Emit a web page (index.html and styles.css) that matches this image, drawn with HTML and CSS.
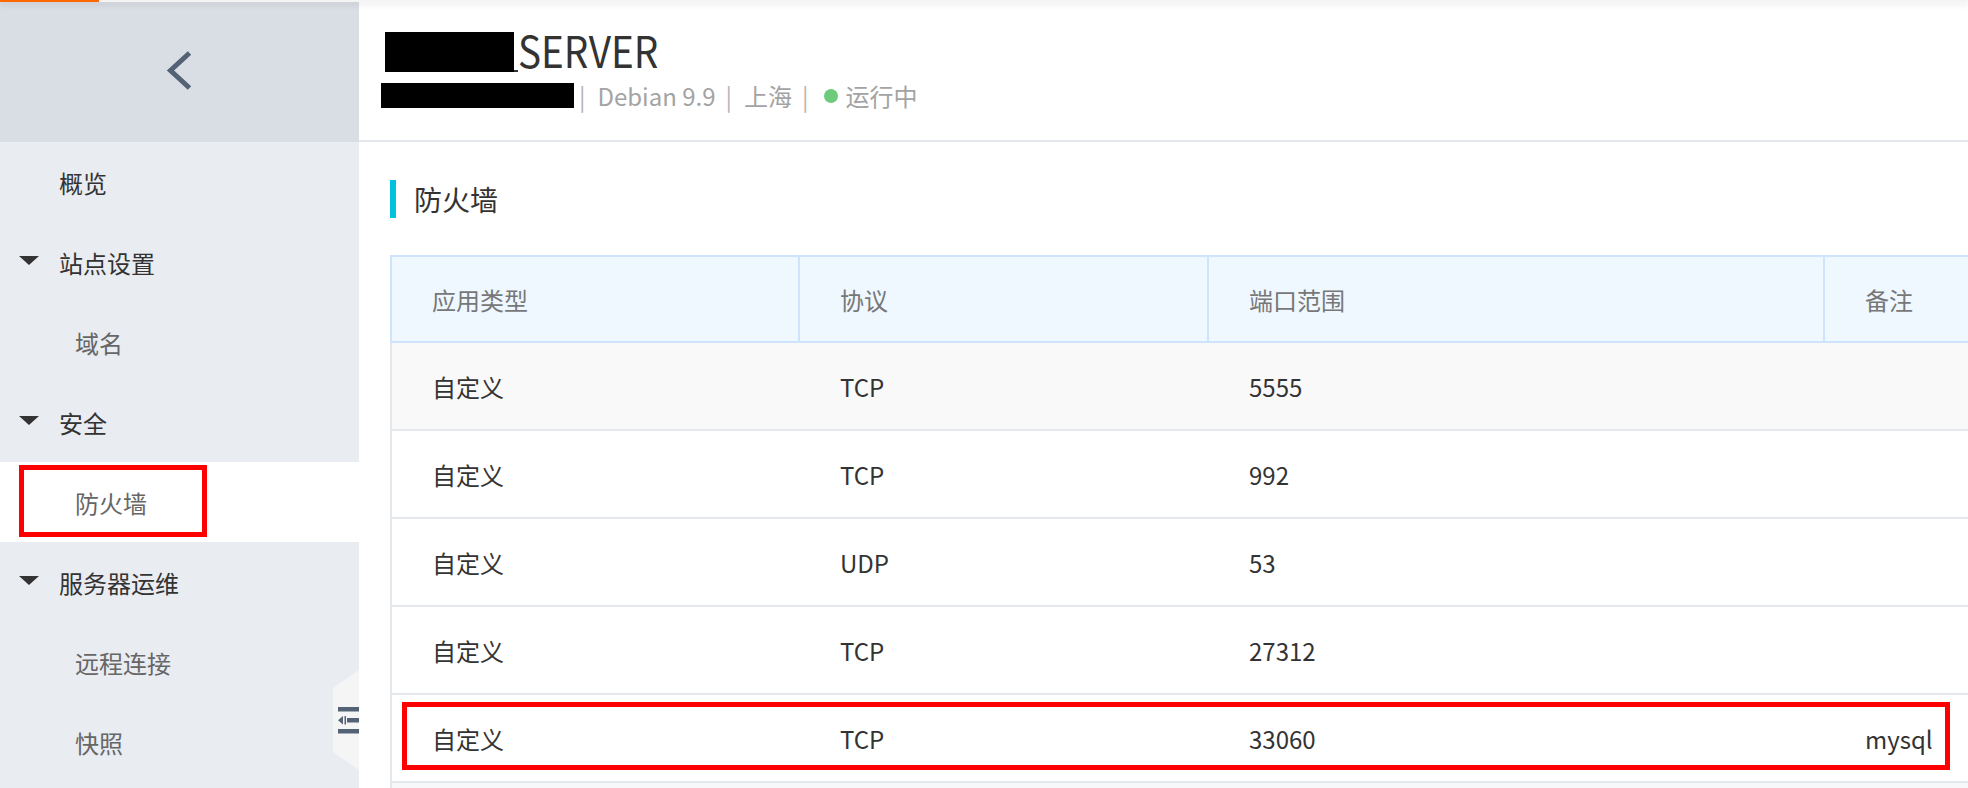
FILE: index.html
```html
<!DOCTYPE html>
<html lang="zh-CN">
<head>
<meta charset="utf-8">
<title>防火墙</title>
<link rel="stylesheet" href="styles.css">
</head>
<body>
<div class="topline"><div class="topline-accent"></div></div>
<div class="app">
  <aside class="sidebar">
    <div class="side-head">
      <svg class="back" width="28" height="44" viewBox="0 0 28 44"><polyline points="23.5,4 4.5,21.5 23.5,39" fill="none" stroke="#536275" stroke-width="5"/></svg>
    </div>
    <nav class="menu">
      <div class="item lvl1 leaf">概览</div>
      <div class="item lvl1"><span class="caret"></span>站点设置</div>
      <div class="item lvl2">域名</div>
      <div class="item lvl1"><span class="caret"></span>安全</div>
      <div class="item lvl2 active">防火墙<span class="mark mark-side"></span></div>
      <div class="item lvl1"><span class="caret"></span>服务器运维</div>
      <div class="item lvl2">远程连接</div>
      <div class="item lvl2">快照</div>
    </nav>
    <div class="collapse">
      <svg width="26" height="100" viewBox="0 0 26 100">
        <polygon points="26,0 0,18 0,82 26,100" fill="#f5f5f5"/>
        <rect x="5" y="37" width="21" height="4.5" fill="#536275"/>
        <rect x="14" y="48" width="12" height="4.5" fill="#536275"/>
        <polygon points="5,50.2 10,46 10,54.5" fill="#536275"/>
        <rect x="11.5" y="46" width="1.5" height="8.5" fill="#536275"/>
        <rect x="5" y="59" width="21" height="4.5" fill="#536275"/>
      </svg>
    </div>
  </aside>
  <main class="main">
    <header class="head">
      <div class="title"><span class="redact redact-title"></span><span class="underscore"></span><span class="title-text">SERVER</span></div>
      <div class="meta">
        <span class="redact redact-ip"></span>
        <span class="sep sep-first">|</span>
        <span>Debian 9.9</span>
        <span class="sep">|</span>
        <span>上海</span>
        <span class="sep">|</span>
        <span class="dot"></span>
        <span>运行中</span>
      </div>
    </header>
    <section class="content">
      <h2 class="sec-title">防火墙</h2>
      <div class="table">
        <div class="thead">
          <div class="th">应用类型</div>
          <div class="th">协议</div>
          <div class="th">端口范围</div>
          <div class="th">备注</div>
        </div>
        <div class="tr hover">
          <div class="td">自定义</div><div class="td">TCP</div><div class="td">5555</div><div class="td"></div>
        </div>
        <div class="tr">
          <div class="td">自定义</div><div class="td">TCP</div><div class="td">992</div><div class="td"></div>
        </div>
        <div class="tr">
          <div class="td">自定义</div><div class="td">UDP</div><div class="td">53</div><div class="td"></div>
        </div>
        <div class="tr">
          <div class="td">自定义</div><div class="td">TCP</div><div class="td">27312</div><div class="td"></div>
        </div>
        <div class="tr">
          <div class="td">自定义</div><div class="td">TCP</div><div class="td">33060</div><div class="td">mysql</div>
          <span class="mark mark-row"></span>
        </div>
        <div class="tr tail"></div>
      </div>
    </section>
  </main>
</div>
</body>
</html>
```
FILE: styles.css
```css
html, body {
  margin: 0;
  padding: 0;
  width: 1968px;
  height: 788px;
  overflow: hidden;
  font-family: "Noto Sans CJK SC", "Noto Sans", sans-serif;
  color: #333;
  background: #fff;
}

.topline {
  position: fixed;
  top: 0;
  left: 0;
  right: 0;
  height: 2px;
  background: #f4f4f4;
  box-shadow: 0 2px 6px rgba(0, 0, 0, 0.16);
  z-index: 10;
}
.topline-accent {
  width: 99px;
  height: 2px;
  background: #ff6a00;
}

.app {
  display: flex;
  height: 788px;
}

/* Sidebar */
.sidebar {
  width: 359px;
  flex: none;
  background: #e9ecf1;
  position: relative;
}
.side-head {
  height: 142px;
  background: #d9dde4;
  display: flex;
  align-items: center;
  justify-content: center;
}
.back { display: block; }

.menu {
  display: flex;
  flex-direction: column;
}
.item {
  height: 80px;
  display: flex;
  align-items: center;
  font-size: 24px;
  position: relative;
}
.lvl1 {
  padding-left: 19px;
  color: #333;
}
.lvl1.leaf { padding-left: 59px; }
.lvl2 {
  padding-left: 75px;
  color: #666;
}
.item.active { background: #fff; }

.caret {
  width: 0;
  height: 0;
  border-left: 10px solid transparent;
  border-right: 10px solid transparent;
  border-top: 9px solid #333;
  margin-right: 20px;
  margin-bottom: 4px;
}

.mark {
  position: absolute;
  box-sizing: border-box;
  border: 5px solid #ff0000;
  pointer-events: none;
}
.mark-side {
  left: 19px;
  top: 3px;
  width: 188px;
  height: 72px;
}

.collapse {
  position: absolute;
  right: 0;
  top: 670px;
  width: 26px;
  height: 100px;
}
.collapse svg { display: block; }

/* Main */
.main {
  flex: 1;
  min-width: 0;
  overflow: hidden;
  background: #fff;
}

.head {
  height: 142px;
  box-sizing: border-box;
  border-bottom: 2px solid #e4e8ee;
  padding: 32px 0 0 22px;
}
.title {
  display: flex;
  align-items: flex-start;
  height: 40px;
  margin-left: 4px;
}
.redact {
  display: inline-block;
  background: #000;
  flex: none;
}
.redact-title {
  width: 129px;
  height: 40px;
}
.underscore {
  width: 4px;
  height: 2px;
  margin-top: 38px;
  background: #333;
  flex: none;
}
.title-text {
  font-size: 43px;
  line-height: 36px;
  margin-top: -1px;
  color: #333;
  transform: scaleX(0.9);
  transform-origin: left center;
  white-space: nowrap;
}
.meta {
  display: flex;
  align-items: center;
  height: 25px;
  margin-top: 11px;
  font-size: 24px;
  line-height: 25px;
  color: #a3a3a3;
}
.redact-ip {
  width: 193px;
  height: 25px;
}
.sep {
  margin: 0 12px 0 10px;
  color: #b5b5b5;
}
.sep-first { margin-left: 5px; }
.dot {
  width: 14px;
  height: 14px;
  border-radius: 50%;
  background: #6fcb7c;
  margin: 0 8px 0 3px;
}

.content {
  padding: 38px 0 0 31px;
}
.sec-title {
  margin: 0;
  height: 38px;
  display: flex;
  align-items: center;
  font-size: 28px;
  font-weight: 400;
  color: #333;
}
.sec-title::before {
  content: "";
  width: 6px;
  height: 38px;
  background: #00c1de;
  margin-right: 18px;
}

.table {
  width: 1700px;
  margin-top: 37px;
}
.thead {
  display: grid;
  grid-template-columns: 406px 409px 616px 1fr;
  height: 88px;
  box-sizing: border-box;
  border: 2px solid #cde4fa;
  border-right: none;
  background: #eff7ff;
}
.th {
  display: flex;
  align-items: center;
  padding-left: 40px;
  font-size: 24px;
  color: #777;
}
.th + .th { border-left: 2px solid #cde4fa; }

.tr {
  display: grid;
  grid-template-columns: 406px 409px 616px 1fr;
  height: 88px;
  box-sizing: border-box;
  border-left: 2px solid #e4e8ed;
  border-bottom: 2px solid #e4e8ed;
  background: #fff;
  position: relative;
}
.tr.hover { background: #f9f9f9; }
.tr.tail { background: #f7f8fa; border-bottom: none; }
.td {
  display: flex;
  align-items: center;
  padding-left: 42px;
  font-size: 24px;
  color: #333;
}
.td:first-child { padding-left: 40px; }

.mark-row {
  left: 10px;
  top: 7px;
  width: 1548px;
  height: 68px;
}
```
